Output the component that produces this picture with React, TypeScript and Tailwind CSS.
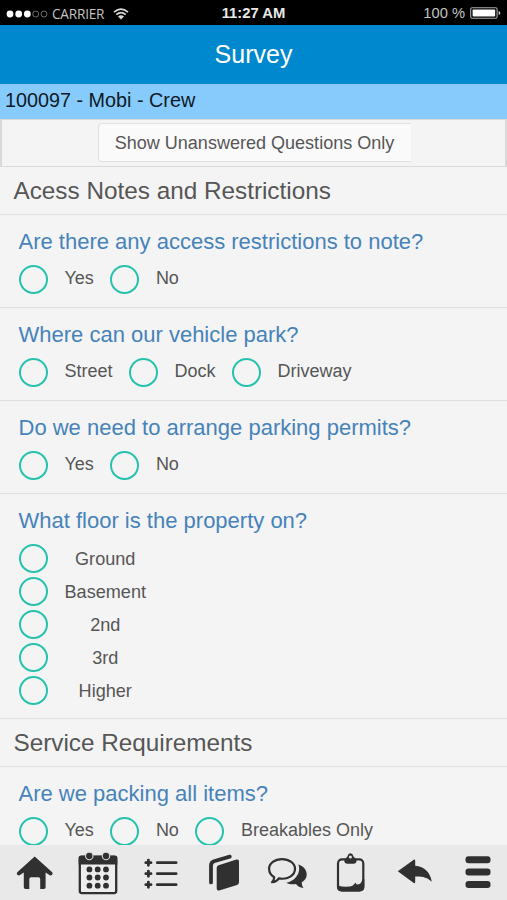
import type { ReactNode } from 'react';

type Question = {
  text: string;
  options: string[];
  stacked?: boolean;
};

type Section = {
  title: string;
  questions: Question[];
};

const sections: Section[] = [
  {
    title: 'Acess Notes and Restrictions',
    questions: [
      {
        text: 'Are there any access restrictions to note?',
        options: ['Yes', 'No'],
      },
      {
        text: 'Where can our vehicle park?',
        options: ['Street', 'Dock', 'Driveway'],
      },
      {
        text: 'Do we need to arrange parking permits?',
        options: ['Yes', 'No'],
      },
      {
        text: 'What floor is the property on?',
        options: ['Ground', 'Basement', '2nd', '3rd', 'Higher'],
        stacked: true,
      },
    ],
  },
  {
    title: 'Service Requirements',
    questions: [
      {
        text: 'Are we packing all items?',
        options: ['Yes', 'No', 'Breakables Only'],
      },
    ],
  },
];

const StatusBar = () => (
  <div className="flex h-[25px] shrink-0 items-center justify-between bg-black pt-[2px] pr-[6px] pl-[6px] text-[#c4c4c4]">
    <div className="flex w-[180px] items-center">
      <svg className="mr-[4px] h-[10px] w-[42px]" viewBox="0 0 42 10">
        <circle cx="4" cy="5" r="3.4" fill="#fff" />
        <circle cx="12.7" cy="5" r="3.4" fill="#fff" />
        <circle cx="21.3" cy="5" r="3.4" fill="#fff" />
        <circle cx="29.7" cy="5" r="3" fill="none" stroke="#777" strokeWidth="0.9" />
        <circle cx="38" cy="5" r="3" fill="none" stroke="#777" strokeWidth="0.9" />
      </svg>
      <span className="w-[53px] font-['Open_Sans',sans-serif] text-[13.6px] leading-none tracking-[-0.2px]">
        CARRIER
      </span>
      <svg className="ml-[8px] h-[12px] w-[16px]" viewBox="0 0 16 12" fill="none" stroke="#d8d8d8" strokeWidth="1.7">
        <path d="M1 4.2Q8-1.8 15 4.2" />
        <path d="M3.3 6.7Q8 2.7 12.7 6.7" />
        <path d="M5 8.4Q8 6 11 8.4L8 11.4Z" fill="#d8d8d8" stroke="none" />
      </svg>
    </div>
    <span className="text-[14.8px] leading-none font-bold whitespace-nowrap text-[#e8e8e8]">11:27 AM</span>
    <div className="flex w-[180px] items-center justify-end">
      <span className="text-[14.7px] leading-none">100 %</span>
      <svg className="ml-[5px] h-[12px] w-[31px]" viewBox="0 0 31 12">
        <rect x="0.7" y="0.7" width="26.4" height="10.6" rx="1.5" fill="none" stroke="#aaa" strokeWidth="1.1" />
        <rect x="2.6" y="2.5" width="22.6" height="7" rx="0.8" fill="#fff" />
        <path d="M28.6 4v4q1.8-.6 1.8-2t-1.8-2" fill="#ccc" />
      </svg>
    </div>
  </div>
);

const QuestionBlock = ({ text, options, stacked }: Question) => (
  <div className="border-b border-[#dfdfdf] pt-[13px] pr-2 pb-[13px] pl-[18.5px]">
    <h3 className="mb-[9px] text-[22px] leading-[28px] whitespace-nowrap text-[#4683ba]">{text}</h3>
    {stacked ? (
      <div className="grid w-fit grid-cols-[29px_auto] items-center gap-x-[16.5px] gap-y-[4px] pl-[0.5px]">
        {options.map((option) => (
          <label key={option} className="contents">
            <span className="size-[29px] rounded-full border-2 border-[#26c2ae]" />
            <span className="text-center text-[18.1px] leading-[28px]">{option}</span>
          </label>
        ))}
      </div>
    ) : (
      <div className="flex items-center gap-[16.5px] pl-[0.5px]">
        {options.map((option) => (
          <label key={option} className="flex items-center gap-[16.5px]">
            <span className="size-[29px] rounded-full border-2 border-[#26c2ae]" />
            <span className="pb-[2px] text-[18px] leading-[27px]">{option}</span>
          </label>
        ))}
      </div>
    )}
  </div>
);

const NavButton = ({ label, children }: { label: string; children: ReactNode }) => (
  <button aria-label={label} className="h-[55px] w-[63px]">
    <svg className="h-[55px] w-[63px]" viewBox="0 0 63 55" fill="#303030">
      {children}
    </svg>
  </button>
);

const NavBar = () => (
  <nav className="flex h-[55px] shrink-0 bg-[#e9e9e9] pl-[3px]">
    <NavButton label="Home">
      <path d="M31.7 11.4L49.2 27.2Q50.2 28.5 49.1 29.7Q47.8 31 46.4 30L42.6 27.4V42.3Q42.6 44 40.9 44H37.2V34Q37.2 32.2 35.4 32.2H28.1Q26.3 32.2 26.3 34V44H22.5Q20.8 44 20.8 42.3V27.4L17 30Q15.5 31 14.3 29.7Q13.2 28.5 14.3 27.2Z" />
    </NavButton>
    <NavButton label="Calendar">
      <rect x="13.8" y="11.7" width="36.4" height="36.4" rx="2" fill="#ededed" stroke="#303030" strokeWidth="2.3" />
      <path d="M12.7 12.5Q12.7 10.7 14.7 10.7H49.3Q51.3 10.7 51.3 12.5V19.5H12.7Z" />
      {[23.3, 40].map((x) => (
        <circle key={x} cx={x} cy="11" r="3.7" stroke="#d8d8d8" strokeWidth="1.1" />
      ))}
      {[24.4, 32.5, 40.7].map((y) =>
        [23.4, 31.7, 40].map((x) => <circle key={`${x}-${y}`} cx={x} cy={y} r="2.9" />)
      )}
    </NavButton>
    <NavButton label="List">
      <g fill="none" stroke="#303030" strokeLinecap="round">
        {[17.7, 28.7, 39.7].map((y) => (
          <g key={y}>
            <path d={`M16.8 ${y}h5.2M19.4 ${y - 2.6}v5.2`} strokeWidth="2.8" />
            <path d={`M28.3 ${y}h18.8`} strokeWidth="2.8" />
          </g>
        ))}
      </g>
    </NavButton>
    <NavButton label="Inventory">
      <path d="M19 37.4V20.8Q19 17.4 22 16.3L37.8 11.6" fill="none" stroke="#303030" strokeWidth="3.8" strokeLinecap="round" />
      <path d="M26.6 20.3L44.5 14.5Q47 13.9 47 16.5V37.2Q47 39.3 45 40L27.2 45.4Q24.7 46 24.7 43.4V22.7Q24.7 20.9 26.6 20.3Z" />
    </NavButton>
    <NavButton label="Messages">
      <path
        d="M27 14.1C19.7 14.1 14.1 18.3 14.1 23.8C14.1 27.5 16 30.4 19.2 32.2C19.1 34.4 18.3 35.9 17 37.2C20.2 37 22.4 35.7 23.8 33.4C33 35 40 30.3 40 23.8C40 18.3 34.3 14.1 27 14.1Z"
        fill="none"
        stroke="#303030"
        strokeWidth="2.2"
        strokeLinejoin="round"
      />
      <path d="M43.3 19.5C48.9 21.4 51.8 25.2 51.7 29.5C51.7 33 49.8 35.5 46.8 37.3C46.6 39.4 47.3 41.3 48.6 43.1C45 42.8 42.5 41.5 41 39.1C37.4 39.7 34 39.2 31.2 37.8C39.5 36.4 46.7 28 43.3 19.5Z" />
    </NavButton>
    <NavButton label="Clipboard">
      <rect x="20" y="14.4" width="25.3" height="31" rx="4" fill="none" stroke="#303030" strokeWidth="2.2" />
      <path d="M28 12.8Q29.2 12.4 29.6 11Q30 8.3 32.4 8.3T35.3 11Q35.7 12.4 37 12.8L38.6 15.5Q38.4 18.8 35.5 18.8H29.4Q26.5 18.8 26.2 15.5Z" />
      <circle cx="32.4" cy="12.1" r="1.5" fill="#e9e9e9" />
      <path d="M20 39.5Q21.2 41.5 24 41.6Q32 42 34.5 40.7L37.5 37.8L38.8 39.6Q43.8 39.6 44.3 34H46.3V42Q46.3 46.4 42 46.4H23.4Q19 46.4 19 42Z" />
    </NavButton>
    <NavButton label="Back">
      <path d="M16.8 26.2L32.4 14.9Q34.2 13.8 34.2 15.7V20.8C43.5 21.6 49.8 28 50.7 36.8C46.4 32.3 41.5 31.2 34.2 31.4V37Q34.2 38.9 32.4 37.8Z" />
    </NavButton>
    <NavButton label="Menu">
      <rect x="21.5" y="11.2" width="25" height="7" rx="3" />
      <rect x="21.5" y="23.6" width="25" height="7" rx="3" />
      <rect x="21.5" y="36" width="25" height="7" rx="3" />
    </NavButton>
  </nav>
);

const App = () => {
  return (
    <div className="flex h-[900px] w-[507px] flex-col overflow-hidden bg-[#f4f4f4] font-['Liberation_Sans',Arial,sans-serif] text-[#565656]">
      <StatusBar />
      <header className="flex h-[59px] shrink-0 items-center justify-center bg-[#0088ce] text-[25px] text-white">
        Survey
      </header>
      <div className="h-[35px] shrink-0 bg-[#87cbfc] pt-[2px] pl-[5px] text-[19.8px] leading-[28px] text-[#0d1a26]">
        100097 - Mobi - Crew
      </div>

      <div className="flex h-[48px] shrink-0 justify-center border-x-2 border-t border-b border-[#d9d9d9] pt-[3px] pl-px">
        <button className="h-[39px] w-[313px] rounded-l-[4px] border border-r-0 border-[#e2e0de] bg-[#fafafa] pt-[2px] text-[18.05px]">
          Show Unanswered Questions Only
        </button>
      </div>

      <main className="min-h-0 flex-1 overflow-hidden">
        {sections.map((section) => (
          <section key={section.title}>
            <h2 className="h-[48px] border-b border-[#dfdfdf] pl-[13.5px] text-[24.3px] leading-[47px]">
              {section.title}
            </h2>
            {section.questions.map((question) => (
              <QuestionBlock key={question.text} {...question} />
            ))}
          </section>
        ))}
      </main>

      <NavBar />
    </div>
  );
};

export default App;
